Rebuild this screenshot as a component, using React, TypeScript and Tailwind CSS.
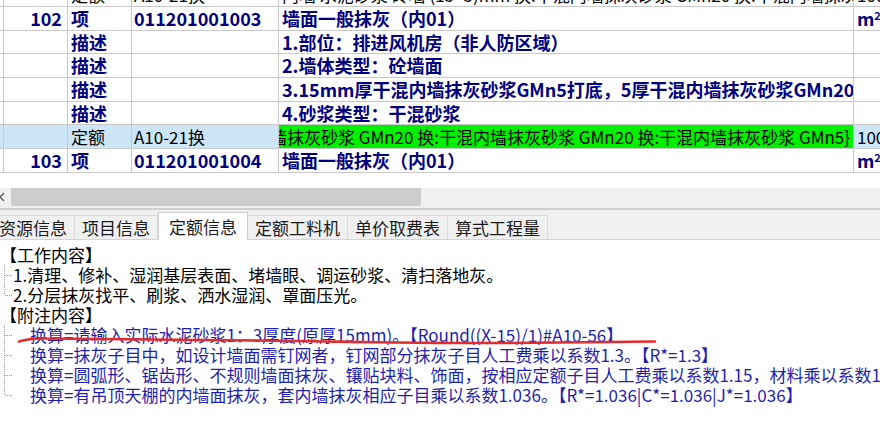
import React from "react";

type RowProps = {
  no?: string;
  kind: string;
  code?: string;
  name: React.ReactNode;
  unit?: React.ReactNode;
  strong?: boolean;
  selected?: boolean;
  className?: string;
};

const line = "border-[#c8c8c8]";

function GridRow({ no, kind, code, name, unit, strong, selected, className = "" }: RowProps) {
  const text = strong ? "text-[18px] font-bold text-[#000080]" : "text-[17px] text-black";
  return (
    <div
      className={`flex h-[23.7px] shrink-0 whitespace-nowrap border-b ${line} ${
        selected ? "bg-[#cde6f7]" : "bg-white"
      } ${text} ${className}`}
    >
      <div className={`w-[4px] shrink-0 border-r ${line}`} />
      <div className={`flex w-[64px] shrink-0 items-center justify-end border-r pr-[5px] ${line}`}>{no}</div>
      <div className={`flex w-[64px] shrink-0 items-center border-r pl-[3px] ${line}`}>{kind}</div>
      <div className={`flex w-[147px] shrink-0 items-center border-r pl-[2px] ${line}`}>{code}</div>
      <div
        className={`flex w-[575px] shrink-0 items-center overflow-hidden border-r ${line} ${
          selected ? "justify-end bg-[#00f000] pr-[3px]" : "pl-[3px]"
        }`}
      >
        {name}
      </div>
      <div className="flex w-[60px] shrink-0 items-center pl-[3px]">{unit}</div>
    </div>
  );
}

function Branch({ last }: { last?: boolean }) {
  return (
    <svg width="13" height="20" className="shrink-0">
      <line x1="4.5" y1="0" x2="4.5" y2={last ? 10 : 20} stroke="#9a9a9a" strokeDasharray="1 1" />
      <line x1="5" y1="10.5" x2="12" y2="10.5" stroke="#9a9a9a" strokeDasharray="1 1" />
    </svg>
  );
}

const M2 = (
  <span>
    m<sup className="text-[11px]">2</sup>
  </span>
);

const tabs = ["资源信息", "项目信息", "定额信息", "定额工料机", "单价取费表", "算式工程量"];

const work = [
  "1.清理、修补、湿润基层表面、堵墙眼、调运砂浆、清扫落地灰。",
  "2.分层抹灰找平、刷浆、洒水湿润、罩面压光。",
];

const notes = [
  "换算=请输入实际水泥砂浆1：3厚度(原厚15mm)。【Round((X-15)/1)#A10-56】",
  "换算=抹灰子目中，如设计墙面需钉网者，钉网部分抹灰子目人工费乘以系数1.3。【R*=1.3】",
  "换算=圆弧形、锯齿形、不规则墙面抹灰、镶贴块料、饰面，按相应定额子目人工费乘以系数1.15，材料乘以系数1.05。【R*=1.15|C*=1.05】",
  "换算=有吊顶天棚的内墙面抹灰，套内墙抹灰相应子目乘以系数1.036。【R*=1.036|C*=1.036|J*=1.036】",
];

export default function App() {
  return (
    <div className="relative flex h-[433px] w-[880px] flex-col overflow-hidden bg-white font-['Noto_Sans_CJK_SC',sans-serif]">
      {/* Grid */}
      <div className="flex h-[173px] shrink-0 flex-col overflow-hidden">
        <GridRow
          className="mt-[-16.7px]"
          kind="定额"
          code="A10-21换"
          name="内墙 水泥砂浆 砖墙 (15+5)mm 换:干混内墙抹灰砂浆 GMn20 换:干混内墙抹灰砂浆 GMn20 换:干混内墙"
          unit="100"
        />
        <GridRow strong no="102" kind="项" code="011201001003" name="墙面一般抹灰（内01）" unit={M2} />
        <GridRow strong kind="描述" name="1.部位：排进风机房（非人防区域）" />
        <GridRow strong kind="描述" name="2.墙体类型：砼墙面" />
        <GridRow strong kind="描述" name="3.15mm厚干混内墙抹灰砂浆GMn5打底，5厚干混内墙抹灰砂浆GMn20抹面" />
        <GridRow strong kind="描述" name="4.砂浆类型：干混砂浆" />
        <GridRow
          selected
          kind="定额"
          code="A10-21换"
          name="{换:干混内墙抹灰砂浆 GMn20 换:干混内墙抹灰砂浆 GMn20 换:干混内墙抹灰砂浆 GMn5}"
          unit="100"
        />
        <GridRow strong no="103" kind="项" code="011201001004" name="墙面一般抹灰（内01）" unit={M2} />
      </div>

      <div className="h-[15px] shrink-0" />

      {/* Horizontal scrollbar */}
      <div className="flex h-[20px] shrink-0 items-start bg-[#f0f0f0]">
        <svg width="5" height="18" className="shrink-0">
          <path d="M4 5 L0 9 L4 13" fill="none" stroke="#606060" strokeWidth="1.5" />
        </svg>
        <div className="ml-[6px] h-[18px] w-[410px] bg-[#cdcdcd]" />
      </div>
      <div className="h-[2px] shrink-0 bg-[#cfcfcf]" />

      {/* Tabs */}
      <div className="flex h-[30px] shrink-0 items-end border-b border-[#d4d4d4] bg-[#f0f0f0] text-[17px] text-[#1a1a1a]">
        {tabs.map((t, i) =>
          i === 2 ? (
            <div
              key={t}
              className="relative z-10 -mb-px flex h-[28px] items-center border-x border-t border-[#cfcfcf] bg-white px-[10px]"
            >
              {t}
            </div>
          ) : (
            <div
              key={t}
              className={`flex h-[24px] items-center border-r border-t border-[#d9d9d9] bg-[#f0f0f0] px-[7px] ${
                i === 0 ? "ml-[-8px]" : ""
              }`}
            >
              {t}
            </div>
          )
        )}
      </div>

      {/* Info content */}
      <div className="flex flex-col whitespace-nowrap pt-[5px] text-[17px] leading-[20px] text-black">
        <div className="h-[20px]">【工作内容】</div>
        {work.map((w, i) => (
          <div key={w} className="flex h-[20px] items-center">
            <Branch last={i === work.length - 1} />
            <span>{w}</span>
          </div>
        ))}
        <div className="h-[20px]">【附注内容】</div>
        {notes.map((n, i) => (
          <div key={n} className="flex h-[20px] items-center text-[#1f1faf]">
            <Branch last={i === notes.length - 1} />
            <span className="ml-[17px]">{n}</span>
          </div>
        ))}
      </div>

      {/* hand-drawn red mark */}
      <svg className="pointer-events-none absolute left-0 top-[330px]" width="880" height="20">
        <path
          d="M19 11.5 Q30 8 45 8.5 L300 11 Q450 14 560 12.5 L655 11.5"
          fill="none"
          stroke="#e52b2b"
          strokeWidth="2.5"
          strokeLinecap="round"
        />
      </svg>
    </div>
  );
}
